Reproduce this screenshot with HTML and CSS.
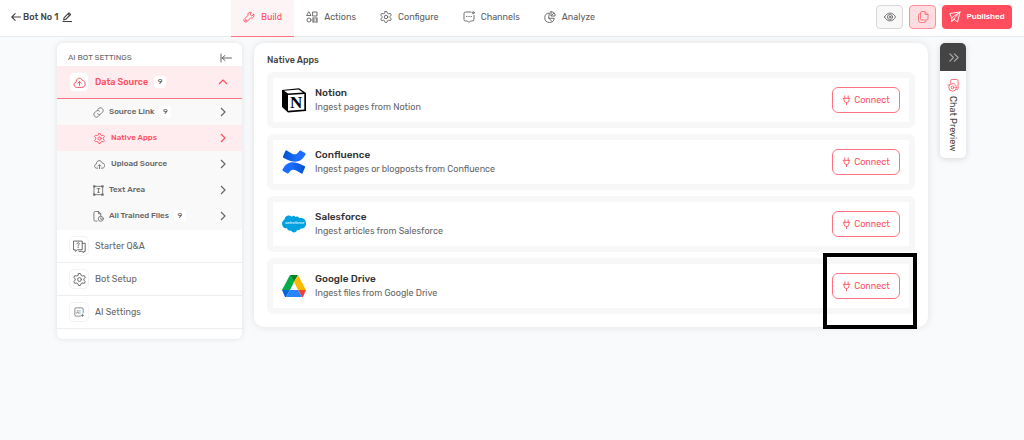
FILE: index.html
```
<!DOCTYPE html>
<html lang="en">
 <head>
  <meta charset="utf-8">
  <meta name="viewport" content="width=device-width, initial-scale=1">
  <title>Bot No 1 - Native Apps</title>
  <link rel="stylesheet" href="styles.css">
 </head>
 <body>
  <!-- Shared icons -->
  <svg class="sprite" aria-hidden="true">
   <symbol id="plug" viewBox="0 0 10 12">
    <path d="M3 1v3M7 1v3M1 4h8M2 4v2a3 3 0 0 0 6 0V4M5 9v2.5"/>
   </symbol>
   <symbol id="chevron" viewBox="0 0 8 12">
    <path d="M2 2l4 4-4 4"/>
   </symbol>
   <symbol id="gear" viewBox="0 0 24 24">
    <path d="M10.500 1h3L15 4.500l2 1 4-.5 1.500 3L20 11v2l2.500 3-1.500 3-4-.5-2 1L13.500 23h-3L9 19.500l-2-1-4 .5-1.500-3L4 13v-2L1.500 8 3 5l4 .5 2-1z"/>
    <circle cx="12" cy="12" r="3.500"/>
   </symbol>
  </svg>

  <!-- Top bar -->
  <header class="topbar">
   <div class="brand">
    <a href="#" class="back" aria-label="Back">
     <svg class="icon" viewBox="0 0 12 12"><path d="M11.500 6H1M5 2L1 6l4 4"/></svg>
    </a>
    <span class="bot-name">Bot No 1</span>
    <button class="plain" aria-label="Rename bot">
     <svg class="icon dark" viewBox="0 0 12 12"><path d="M2 9.500l.6-2.800L8.300 1l2 2-5.700 5.700zM7 2.300l2 2M1 11.300h10.500"/></svg>
    </button>
   </div>
   <nav class="tabs">
    <a href="#" class="tab active">
     <svg class="icon" viewBox="0 0 24 24"><path d="M21.500 6.500l-4 3.500-3.500-3 2.800-4.200c-4-1.600-8.300 2-7 6.300L2 17c-1.500 3 2 6.500 5 5l8-8c4.500 1.500 8-3 6.500-7.500z"/><circle cx="5.500" cy="18.500" r="1"/></svg>
     Build
    </a>
    <a href="#" class="tab">
     <svg class="icon" viewBox="0 0 24 24"><path d="M6 2l4 7H2zM14 2h8v8h-8zM14 14h8M14 18h3M20 18h2M14 22h8M14 14v8M22 14v8"/><circle cx="6" cy="18" r="4"/></svg>
     Actions
    </a>
    <a href="#" class="tab">
     <svg class="icon"><use href="#gear"/></svg>
     Configure
    </a>
    <a href="#" class="tab">
     <svg class="icon" viewBox="0 0 24 24"><path d="M16 2H5Q2 2 2 5v12q0 3 3 3h4l3 3 3-3h3q4 0 4-4V9M7 11h1M11.500 11h1M16 11h1"/><circle cx="20.500" cy="3.500" r="2"/></svg>
     Channels
    </a>
    <a href="#" class="tab">
     <svg class="icon" viewBox="0 0 24 24"><path d="M10 4a9.500 9.500 0 1 0 10.500 10.500H10zM14 1.500V10h8.500A9 9 0 0 0 14 1.500zM15 9l5-5M10 14.500l6 6.500"/></svg>
     Analyze
    </a>
   </nav>
   <div class="actions">
    <button class="square" aria-label="View">
     <svg class="icon" viewBox="0 0 24 24"><path d="M1 12c5-10.500 17-10.500 22 0-5 10.500-17 10.500-22 0z"/><circle cx="12" cy="12" r="5"/><circle cx="12" cy="12" r="1.500"/></svg>
    </button>
    <button class="square pink" aria-label="Copy">
     <svg class="icon" viewBox="0 0 24 24"><path d="M10 1h6l6 6v9q0 2-2 2H10q-3 0-3-3V4q0-3 3-3zM16 1v6h6M7 5q-4 0-4 4v10q0 4 4 4h7q3 0 4-3"/></svg>
    </button>
    <button class="published">
     <svg class="icon" viewBox="0 0 24 24"><path d="M22 2L1.500 5l4 8.500L22 2l-5 20-6-5M5.500 13.500L5 21l6-4M5 21L22 2"/></svg>
     Published
    </button>
   </div>
  </header>

  <div class="workspace">
   <!-- Settings menu -->
   <aside class="sidebar">
    <div class="sidebar-head">
     <span>AI BOT SETTINGS</span>
     <button class="plain" aria-label="Collapse menu">
      <svg class="icon thin" viewBox="0 0 12 12"><path d="M1 2v8M11.500 6H2M5 3.500L2 6l3 2.500"/></svg>
     </button>
    </div>
    <a href="#" class="item open">
     <span class="tile"><svg class="icon" viewBox="0 0 24 24"><path d="M7 21c-7 0-7-9-1-9.500C5 4 14 1 17 8c7 1 8 13 0 13zM12 17v-6M9 13.500l3-3 3 3"/></svg></span>
     <span>Data Source</span>
     <span class="badge">9</span>
     <svg class="chevron up"><use href="#chevron"/></svg>
    </a>
    <div class="submenu">
     <a href="#" class="subitem">
      <svg class="icon" viewBox="0 0 24 24"><path d="M10 6l3-3c5-4 12 3 8 8l-4 4c-2 2-5 2-7 0M14 18l-3 3c-5 4-12-3-8-8l4-4c2-2 5-2 7 0"/></svg>
      <span>Source Link</span>
      <span class="badge">9</span>
      <svg class="chevron"><use href="#chevron"/></svg>
     </a>
     <a href="#" class="subitem selected">
      <svg class="icon"><use href="#gear"/></svg>
      <span>Native Apps</span>
      <svg class="chevron"><use href="#chevron"/></svg>
     </a>
     <a href="#" class="subitem indent">
      <svg class="icon" viewBox="0 0 24 24"><path d="M8 20H6c-6 0-6-8-1-9C5 2 16 1 18 9c7 0 7 11 0 11h-2M12 21v-8M9 15.500l3-3 3 3"/></svg>
      <span>Upload Source</span>
      <svg class="chevron"><use href="#chevron"/></svg>
     </a>
     <a href="#" class="subitem">
      <svg class="icon" viewBox="0 0 24 24"><path d="M3 3h18v18H3zM1.500 1.500h3v3h-3zM19.500 1.500h3v3h-3zM1.500 19.500h3v3h-3zM19.500 19.500h3v3h-3zM9 8h6M12 8v8M10 16h4"/></svg>
      <span>Text Area</span>
      <svg class="chevron"><use href="#chevron"/></svg>
     </a>
     <a href="#" class="subitem">
      <svg class="icon" viewBox="0 0 24 24"><path d="M9 22H5q-3 0-3-3V4q0-3 3-3h7l5 5v4M12 1v5h5M17 15v3h2"/><circle cx="17" cy="17" r="5.500"/></svg>
      <span>All Trained Files</span>
      <span class="badge">9</span>
      <svg class="chevron"><use href="#chevron"/></svg>
     </a>
    </div>
    <a href="#" class="item">
     <span class="tile"><svg class="icon" viewBox="0 0 24 24"><path d="M1.500 2H17v16H8l-4 3v-3H1.500zM17 6h5.500v15H20v2l-4-2h-5M7.500 7c0-3 4-3 4 0 0 1.500-2 1.500-2 3.500M9.500 13v1"/></svg></span>
     <span>Starter Q&amp;A</span>
    </a>
    <a href="#" class="item">
     <span class="tile"><svg class="icon"><use href="#gear"/></svg></span>
     <span>Bot Setup</span>
    </a>
    <a href="#" class="item">
     <span class="tile"><svg class="icon small" viewBox="0 0 24 24"><path d="M15 22H5q-3 0-3-3V5q0-3 3-3h14q3 0 3 3v9M20 17v6M17 20h6"/><text x="5" y="16" class="ai-mark">AI</text></svg></span>
     <span>AI Settings</span>
    </a>
   </aside>

   <!-- App list -->
   <main class="panel">
    <h1>Native Apps</h1>
    <ul class="apps">
     <li class="app">
      <svg class="logo" viewBox="0 0 24 24">
       <path d="M0 2L17 .3 24 5v18L6 24.500 0 19z" fill="#000"/>
       <path d="M2 2.700L16.500 1.600 21 4.500 6 5.400zM6 7l16.300-1v15.600L6 22.700z" fill="#fff"/>
       <text x="8" y="20" class="notion-mark">N</text>
      </svg>
      <div class="about">
       <h2>Notion</h2>
       <p>Ingest pages from Notion</p>
      </div>
      <button class="connect"><svg class="icon"><use href="#plug"/></svg>Connect</button>
     </li>
     <li class="app">
      <svg class="logo" viewBox="0 0 24 24">
       <defs>
        <linearGradient id="blueTop"><stop offset="0" stop-color="#0052cc"/><stop offset=".6" stop-color="#1a6dff"/></linearGradient>
        <linearGradient id="blueBottom"><stop offset=".4" stop-color="#1a6dff"/><stop offset="1" stop-color="#0052cc"/></linearGradient>
       </defs>
       <path d="M3.500.8L1 6.500q-.3.900.6 1.400C11 12.500 18 14.500 23.500 4.500q.4-.9-.5-1.400L18.500.6q-.8-.4-1.300.4C14 6.500 11 4.500 4.800.4q-.9-.4-1.300.4z" fill="url(#blueTop)"/>
       <path d="M20.500 23.200l2.500-5.700q.3-.9-.6-1.400C13 11.500 6 9.500.5 19.500q-.4.900.5 1.400l4.500 2.500q.8.400 1.300-.4C10 17.500 13 19.500 19.200 23.600q.9.400 1.300-.4z" fill="url(#blueBottom)"/>
      </svg>
      <div class="about">
       <h2>Confluence</h2>
       <p>Ingest pages or blogposts from Confluence</p>
      </div>
      <button class="connect"><svg class="icon"><use href="#plug"/></svg>Connect</button>
     </li>
     <li class="app">
      <svg class="logo" viewBox="0 0 24 24">
       <path d="M10 5C8 2.500 3 3 2.500 7.500 1 9-.5 10 .3 13c.7 3 3 3.500 4.700 3.300C6 19 8 19 9 18.500c1.500 3 5.500 2.300 6-.5 2 .6 3-.3 3.700-1.500 4 .5 6-3.500 5.200-6.300C23 6.500 20 5.500 17.700 6.300 16 4 14 4.300 13.300 5 12 3 10.500 4 10 5z" fill="#00a1e0"/>
       <text x="3" y="12" class="sf-mark">salesforce</text>
      </svg>
      <div class="about">
       <h2>Salesforce</h2>
       <p>Ingest articles from Salesforce</p>
      </div>
      <button class="connect"><svg class="icon"><use href="#plug"/></svg>Connect</button>
     </li>
     <li class="app">
      <svg class="logo" viewBox="0 0 24 24">
       <path d="M8 1L0 16h8l4-8z" fill="#00ac47"/>
       <path d="M8 1h8l-4 7z" fill="#00832d"/>
       <path d="M16 1l8 15h-8L12 8z" fill="#ffba00"/>
       <path d="M0 16h8l-4 7H3z" fill="#0066da"/>
       <path d="M8 16h8l4 7H4z" fill="#2684fc"/>
       <path d="M16 16h8l-3 7h-1z" fill="#ea4335"/>
      </svg>
      <div class="about">
       <h2>Google Drive</h2>
       <p>Ingest files from Google Drive</p>
      </div>
      <button class="connect"><svg class="icon"><use href="#plug"/></svg>Connect</button>
      <span class="highlight"></span>
     </li>
    </ul>
   </main>

   <!-- Chat preview drawer handle -->
   <button class="preview">
    <span class="preview-top">
     <svg class="icon" viewBox="0 0 12 12"><path d="M2 2l4 4-4 4M7 2l4 4-4 4"/></svg>
    </span>
    <span class="preview-body">
     <svg class="icon" viewBox="0 0 24 28"><path d="M7 9V4q0-3 3-3h10q3 0 3 3v16q0 3-3 3M1 13h3"/><circle cx="11" cy="18" r="8"/><circle cx="11" cy="18" r="3"/></svg>
     <span class="vertical">Chat Preview</span>
    </span>
   </button>
  </div>
 </body>
</html>
```
FILE: styles.css
```
/* Base */
* {
 box-sizing: border-box;
}
body {
 margin: 0;
 font-family: Rubik, Roboto, sans-serif;
 font-size: 9px;
 line-height: 12px;
 color: #666;
 background-color: #f9fafc;
}
a {
 color: inherit;
 text-decoration: none;
}
button {
 font: inherit;
 color: inherit;
 padding: 0;
 cursor: pointer;
}
.sprite {
 display: none;
}
.icon {
 display: block;
 flex: none;
 width: 12px;
 height: 12px;
 fill: none;
 stroke: currentColor;
 stroke-width: 1.8;
 stroke-linecap: round;
 stroke-linejoin: round;
}
.icon.thin {
 stroke-width: 1;
}
.plain {
 border: none;
 background: none;
}
/* Top bar */
.topbar {
 display: flex;
 height: 37px;
 background-color: #fff;
 border-bottom: 1px solid #e8e9eb;
}
.brand {
 display: flex;
 align-items: center;
 width: 231px;
 padding: 0 0 3px 11px;
 gap: 2px;
 color: #444;
}
.brand .icon {
 width: 10px;
 height: 10px;
 stroke-width: 1.3;
}
.bot-name {
 font-weight: 500;
 margin-right: 2px;
}
.tabs {
 display: flex;
}
.tab {
 display: flex;
 align-items: center;
 gap: 6px;
 padding: 0 12px 3px;
 color: #606060;
}
.tab.active {
 height: 37px;
 padding-bottom: 2px;
 color: #ff4d5e;
 background-color: #fdf4f5;
 border-bottom: 1px solid #ff7381;
}
.actions {
 display: flex;
 gap: 6px;
 margin-left: auto;
 padding: 5px 12px 0 0;
}
.square {
 display: flex;
 align-items: center;
 justify-content: center;
 width: 27px;
 height: 24px;
 border: 1px solid #d8d8d8;
 border-radius: 4px;
 background-color: #f8f8f8;
}
.square.pink {
 color: #ff6c7a;
 border-color: #ff8e99;
 background-color: #ffdcdf;
}
.published {
 display: flex;
 align-items: center;
 justify-content: center;
 gap: 5px;
 width: 70px;
 height: 24px;
 border: none;
 border-radius: 4px;
 font-size: 8px;
 font-weight: 500;
 color: #fff;
 background-color: #ff4d5e;
}
/* Page body */
.workspace {
 display: flex;
 align-items: flex-start;
 gap: 12px;
 padding: 6px 58px 20px 57px;
}
/* Settings menu */
.sidebar {
 flex: none;
 width: 185px;
 padding-bottom: 10px;
 border-radius: 6px;
 overflow: hidden;
 background-color: #fff;
 box-shadow: 0 0 6px rgba(0, 0, 0, 0.1);
}
.sidebar-head {
 display: flex;
 align-items: center;
 justify-content: space-between;
 height: 23px;
 padding: 6px 10px 0 11px;
 font-size: 8px;
}
.item {
 display: flex;
 align-items: center;
 gap: 6px;
 height: 33px;
 padding: 0 15px 0 12px;
 border-bottom: 1px solid #eee;
}
.item.open {
 font-weight: 500;
 color: #ff4d5e;
 background-color: #ffecee;
 border-bottom-color: #ff7381;
}
.tile {
 display: flex;
 align-items: center;
 justify-content: center;
 width: 20px;
 height: 20px;
 border: 1px solid #f3f3f3;
 border-radius: 5px;
 background-color: #fff;
}
.tile .icon {
 width: 13px;
 height: 13px;
}
.tile .icon.small {
 width: 10px;
 height: 10px;
}
.ai-mark {
 font-size: 11px;
 fill: #666;
 stroke: none;
}
.badge {
 width: 12px;
 border-radius: 3px;
 font-size: 8px;
 font-weight: 400;
 text-align: center;
 color: #555;
 background-color: #fff;
}
.chevron {
 width: 8px;
 height: 12px;
 margin-left: auto;
 fill: none;
 stroke: currentColor;
 stroke-width: 1.2;
}
.chevron.up {
 transform: rotate(-90deg);
}
.submenu {
 padding-bottom: 1px;
 background-color: #f9f9f9;
}
.subitem {
 display: flex;
 align-items: center;
 gap: 5px;
 height: 26px;
 padding: 0 15px 0 36px;
 font-size: 8px;
 font-weight: 500;
}
.subitem .icon {
 width: 11px;
 height: 11px;
}
.subitem.selected,
.subitem.indent {
 padding-left: 37px;
 gap: 6px;
}
.subitem.selected {
 color: #ff4d5e;
 background-color: #ffecee;
}
/* App list */
.panel {
 flex: 1;
 min-width: 0;
 padding: 11px 13px 13px;
 border-radius: 10px;
 background-color: #fff;
 box-shadow: 0 0 8px rgba(0, 0, 0, 0.1);
}
.panel h1 {
 margin: 0 0 6px;
 font-size: 9px;
 line-height: 12px;
 font-weight: 500;
 color: #444;
}
.apps {
 display: grid;
 gap: 6px;
 margin: 0;
 padding: 0;
 list-style: none;
}
.app {
 position: relative;
 display: flex;
 align-items: center;
 gap: 9px;
 height: 56px;
 padding: 0 9px;
 border: 6px solid #f7f7f7;
 border-radius: 6px;
}
.logo {
 flex: none;
 width: 24px;
 height: 24px;
 overflow: visible;
}
.notion-mark {
 font-family: "Liberation Serif", serif;
 font-size: 17px;
 font-weight: 700;
}
.sf-mark {
 font-size: 4px;
 font-style: italic;
 fill: #fff;
}
.about {
 flex: 1;
}
.about h2 {
 margin: 0;
 font-size: 10px;
 line-height: 14px;
 font-weight: 500;
 color: #333;
}
.about p {
 margin: 0;
 line-height: 14px;
}
.connect {
 display: flex;
 align-items: center;
 justify-content: center;
 gap: 3px;
 width: 68px;
 height: 26px;
 border: 1px solid #ff7381;
 border-radius: 6px;
 color: #ff4d5e;
 background-color: #fff;
}
.connect .icon {
 width: 9px;
 height: 10px;
 stroke-width: 1;
}
/* Frame around the last button */
.highlight {
 position: absolute;
 top: -11px;
 right: -8px;
 width: 94px;
 height: 76px;
 border: 4px solid #000;
 pointer-events: none;
}
/* Chat preview */
.preview {
 flex: none;
 width: 26px;
 border: none;
 border-radius: 5px;
 overflow: hidden;
 color: #444;
 background-color: #fff;
 box-shadow: 0 1px 6px rgba(0, 0, 0, 0.15);
}
.preview-top {
 display: flex;
 align-items: center;
 justify-content: center;
 height: 28px;
 color: #aaa;
 background-color: #444;
}
.preview-top .icon {
 width: 11px;
 height: 11px;
 stroke-width: 1.3;
}
.preview-body {
 display: flex;
 flex-direction: column;
 align-items: center;
 gap: 4px;
 padding: 8px 0 7px;
}
.preview-body .icon {
 height: 13px;
 color: #ff4d5e;
}
.vertical {
 writing-mode: vertical-rl;
 font-size: 9px;
}
```
